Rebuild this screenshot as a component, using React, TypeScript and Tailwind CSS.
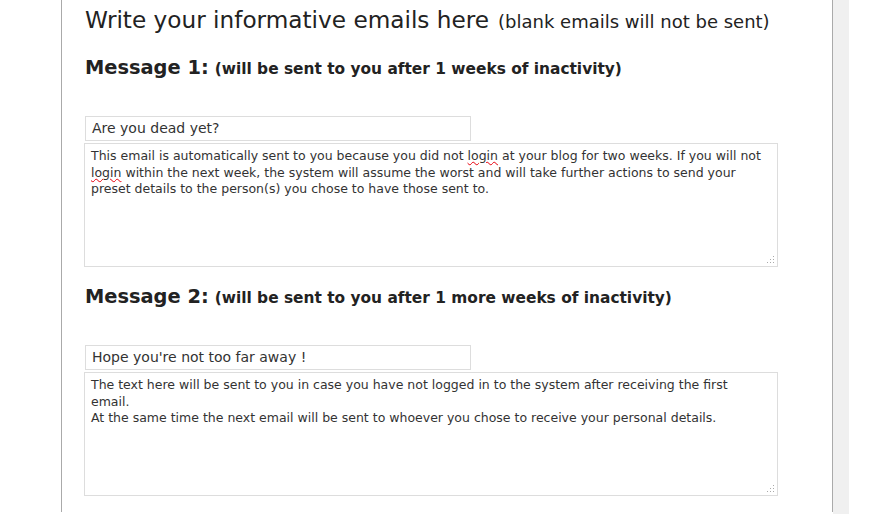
const font = { fontFamily: '"DejaVu Sans", Verdana, sans-serif' };

function Grip() {
  return (
    <svg className="absolute right-[2px] bottom-[2px]" width="8" height="8" viewBox="0 0 8 8">
      <rect x="6" y="0" width="1" height="1" fill="#aaa" />
      <rect x="3" y="3" width="1" height="1" fill="#aaa" />
      <rect x="6" y="3" width="1" height="1" fill="#aaa" />
      <rect x="0" y="6" width="1" height="1" fill="#aaa" />
      <rect x="3" y="6" width="1" height="1" fill="#aaa" />
      <rect x="6" y="6" width="1" height="1" fill="#aaa" />
    </svg>
  );
}

function Misspelled({ children }: { children: string }) {
  return <span className="underline decoration-wavy decoration-red-600 decoration-1 underline-offset-1">{children}</span>;
}

interface MessageProps {
  num: number;
  note: string;
  subject: string;
  body: React.ReactNode;
}

function Message({ num, note, subject, body }: MessageProps) {
  return (
    <div>
      <h3 className="text-[#222] font-bold flex items-baseline gap-[6px]">
        <span className="text-[19.4px]">Message {num}:</span>
        <span className="text-[15.4px]">{note}</span>
      </h3>
      <div className="mt-[34px] w-[386px] h-[25px] border border-[#ddd] px-[6px] text-[14px] leading-[23px] text-[#333]">
        {subject}
      </div>
      <div className="relative mt-[2px] -ml-px w-[694px] h-[124px] border border-[#ddd] pl-[6px] pr-[9px] py-[4px] text-[12.5px] leading-[16.6px] text-[#333]">
        {body}
        <Grip />
      </div>
    </div>
  );
}

export default function App() {
  return (
    <div className="w-[879px] h-[514px] bg-white flex" style={font}>
      <div className="w-[61px]" />
      <div className="w-[772px] h-[512px] border-x border-[#aaa] pl-[23px] pt-[3px]">
        <h2 className="text-[#222] flex items-baseline gap-[9px]">
          <span className="text-[23.2px]">Write your informative emails here</span>
          <span className="text-[18px]">(blank emails will not be sent)</span>
        </h2>
        <div className="mt-[15px]">
          <Message
            num={1}
            note="(will be sent to you after 1 weeks of inactivity)"
            subject="Are you dead yet?"
            body={
              <p>
                This email is automatically sent to you because you did not <Misspelled>login</Misspelled> at your blog for two weeks. If you will not{' '}
                <Misspelled>login</Misspelled> within the next week, the system will assume the worst and will take further actions to send your preset details to the person(s) you chose to have those sent to.
              </p>
            }
          />
        </div>
        <div className="mt-[15px]">
          <Message
            num={2}
            note="(will be sent to you after 1 more weeks of inactivity)"
            subject="Hope you're not too far away !"
            body={
              <>
                <p>The text here will be sent to you in case you have not logged in to the system after receiving the first email.</p>
                <p>At the same time the next email will be sent to whoever you chose to receive your personal details.</p>
              </>
            }
          />
        </div>
      </div>
      <div className="w-[16px] h-full bg-[#f0f0f0]" />
    </div>
  );
}
